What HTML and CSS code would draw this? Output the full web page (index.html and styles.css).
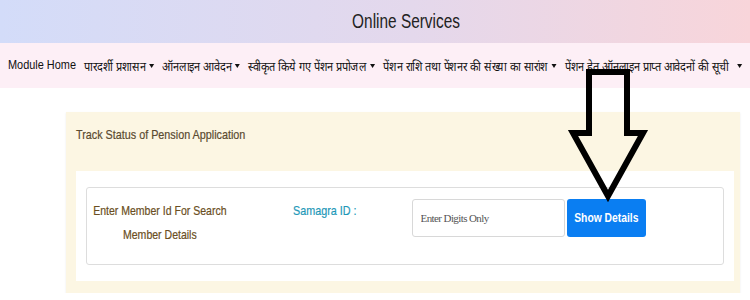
FILE: index.html
```html
<!DOCTYPE html>
<html lang="hi">
<head>
    <meta charset="UTF-8">
    <title>Online Services</title>
    <link rel="stylesheet" href="styles.css">
</head>
<body>
    <header class="top"><span class="top-text">Online Services</span></header>
    <nav class="menu">
        <div class="menu-row">
            <a>Module Home</a>
            <a class="drop">पारदर्शी प्रशासन</a>
            <a class="drop">ऑनलाइन आवेदन</a>
            <a class="drop">स्वीकृत किये गए पेंशन प्रपोजल</a>
            <a class="drop">पेंशन राशि तथा पेंशनर की संख्या का सारांश</a>
            <a class="drop last">पेंशन हेतु ऑनलाइन प्राप्त आवेदनों की सूची</a>
        </div>
    </nav>
    <main class="page">
        <section class="card">
            <h3 class="card-title"><span class="narrow">Track Status of Pension Application</span></h3>
            <div class="card-body">
                <div class="search">
                    <p class="hint">Enter Member Id For Search<br>Member Details</p>
                    <label class="id-label">Samagra ID :</label>
                    <div class="group">
                        <input class="field" placeholder="Enter Digits Only">
                        <button class="btn"><span class="btn-text">Show Details</span></button>
                    </div>
                </div>
            </div>
        </section>
    </main>
    <!-- arrow drawn over the page pointing to the button -->
    <svg class="arrow" width="90" height="140" viewBox="0 0 90 140">
        <polygon points="22,3 60,3 60,64 76,64 41,127 6,64 22,64" fill="none" stroke="#000" stroke-width="6" stroke-linejoin="miter"/>
    </svg>
</body>
</html>
```

FILE: styles.css
```css
body{
    margin: 0;
    font-family: "Liberation Sans", sans-serif;
    background: #fff;
    position: relative;
    overflow: hidden;
}
/* 顶部标题条 */
.top{
    height: 43px;
    line-height: 43px;
    text-align: center;
    padding-left: 62px;
    font-size: 20px;
    color: #222;
    background: linear-gradient(90deg, #d3dcf9, #e4d8ec 55%, #f8d5da);
}
/* 字体偏窄，用scaleX压缩文字 */
.top-text{
    display: inline-block;
    transform: scaleX(.77);
}
.menu{
    height: 45px;
    display: flex;
    align-items: center;
    padding-left: 8px;
    background: #fdeff6;
    white-space: nowrap;
}
.menu-row{
    display: flex;
    gap: 10px;
    font-size: 13px;
    transform: scaleX(.84);
    transform-origin: left center;
}
.menu a{
    color: #111;
}
.drop::after{
    content: "";
    display: inline-block;
    margin-left: 4px;
    vertical-align: 3px;
    border-left: 3px solid transparent;
    border-right: 3px solid transparent;
    border-top: 4px solid #111;
}
.menu a.last::after{
    margin-left: 10px;
}
.page{
    padding: 24px 0 0 66px;
}
.card{
    width: 674px;
    background: #fcf6e3;
    box-shadow: 0 1px 2px rgba(0,0,0,.08);
    padding: 10px 6px 12px 10px;
    box-sizing: border-box;
}
.card-title{
    margin: 0 0 23px;
    font-weight: normal;
    font-size: 13px;
    color: #5a4a30;
    line-height: 26px;
    white-space: nowrap;
    -webkit-text-stroke: 0.2px #5a4a30;
}
.narrow{
    display: inline-block;
    transform: scaleX(.83);
    transform-origin: left center;
}
.card-body{
    background: #fff;
    padding: 16px 10px;
}
.search{
    border: 1px solid #ddd;
    border-radius: 3px;
    height: 78px;
    display: flex;
    align-items: flex-start;
    padding: 11px 0 0 4px;
    box-sizing: border-box;
    white-space: nowrap;
}
.hint{
    margin: 0;
    width: 170px;
    flex: none;
    text-align: center;
    font-size: 13px;
    line-height: 24px;
    color: #6a4e22;
    -webkit-text-stroke: 0.2px #6a4e22;
    transform: scaleX(.81);
    transform-origin: left top;
}
.id-label{
    margin-left: 32px;
    font-size: 13px;
    line-height: 24px;
    color: #1e98b8;
    -webkit-text-stroke: 0.2px #1e98b8;
    display: inline-block;
    transform: scaleX(.83);
    transform-origin: left top;
}
.group{
    display: flex;
    margin-left: 42px;
}
.field{
    width: 153px;
    height: 38px;
    box-sizing: border-box;
    border: 1px solid #d8d8d8;
    border-radius: 3px;
    padding: 0 8px;
    font-family: "Liberation Serif", serif;
    font-size: 11px;
    letter-spacing: -0.6px;
}
.field::placeholder{
    color: #555;
}
.btn{
    margin-left: 2px;
    width: 79px;
    height: 38px;
    padding: 0;
    border: 0;
    border-radius: 3px;
    background: #0a7ef2;
    color: #fff;
    font-family: "Liberation Sans", sans-serif;
    font-weight: bold;
    font-size: 12px;
    white-space: nowrap;
}
.btn-text{
    display: inline-block;
    transform: scaleX(.86);
}
.arrow{
    position: absolute;
    left: 567px;
    top: 69px;
}
```
